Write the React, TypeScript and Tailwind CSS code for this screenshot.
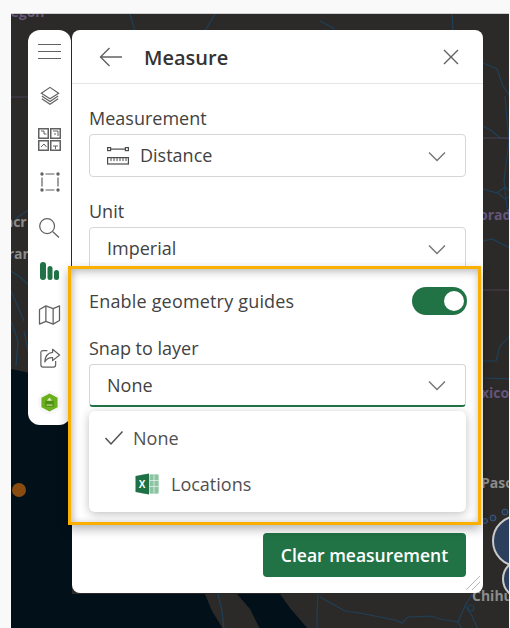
import React from "react";

const font = { fontFamily: '"Open Sans", "Noto Sans", sans-serif' };

const Chevron = () => (
  <svg width="18" height="12" viewBox="0 0 18 12" fill="none" stroke="#757575" strokeWidth="1.4">
    <path d="M1 1.5 L9 9.5 L17 1.5" />
  </svg>
);

const MapBackdrop = () => (
  <svg className="absolute left-0 top-0" width="499" height="615" viewBox="11 13 499 615" fill="none">
    <path d="M11 368 L30 372 L50 385 L72 400 L72 593 L205 593 L212 610 L223 628 L11 628 Z" fill="#02101a" />
    <path d="M237 593 L280 593 L290 607 L308 628 L260 628 L250 608 Z" fill="#02101a" />
    <g stroke="#1f4058" strokeWidth="1.2">
      <path d="M130 13 L135 30 M215 13 L205 30 M320 20 L335 28 M452 13 L453 30" />
      <path d="M483 62 L497 68 L503 85 L510 95" />
      <path d="M483 125 L492 130 L500 137 L510 138 M505 95 L509 140 L504 180 L508 215" />
      <path d="M483 188 L497 192 L505 186 L510 190 M498 192 L505 198 L510 195" />
      <path d="M483 240 L492 238 L510 247" />
      <path d="M483 360 L496 360 L500 345 L510 335 M483 377 L510 378" />
      <path d="M11 225 L18 216 L30 208 M11 270 L20 276 L30 285 M11 290 L24 320 M11 320 L18 340 L16 365 M24 330 L30 360" />
      <path d="M318 593 L317 612 L317 628 M320 596 L345 610 L360 612 L375 615 L395 619 L402 622 L408 616 L432 615 L440 618 L458 621 M458 621 L465 605 L472 593 M465 605 L471 613 L478 628 M458 621 L462 628" />
      <circle cx="471" cy="607" r="3" />
      <path d="M218 593 L222 610 L224 628" />
    </g>
    <path d="M11 96 L30 96 M483 137 L510 137 M483 289 L510 289" stroke="#4a3f55" strokeWidth="1" />
    <circle cx="19" cy="489" r="7" fill="#8a4b10" />
    <g stroke="#3f5878" fill="#26364f" strokeWidth="1">
      <circle cx="485" cy="520" r="2.5" />
      <circle cx="493" cy="517" r="3" />
      <circle cx="505" cy="511" r="3" />
    </g>
    <circle cx="518" cy="540" r="25" fill="#2c3f5c" stroke="#c9c9c9" strokeWidth="2" />
    <circle cx="522" cy="578" r="19" fill="#2c3f5c" stroke="#c9c9c9" strokeWidth="2" />
  </svg>
);

const MapLabel = ({ className, children }: { className: string; children: React.ReactNode }) => (
  <span className={`absolute text-[14px] font-bold leading-none whitespace-nowrap ${className}`}>{children}</span>
);

const Toolbar = () => (
  <div className="relative w-[43px] h-[395px] shrink-0 rounded-[12px] bg-white flex flex-col items-center text-[#616161]">
    <svg className="mt-[13px]" width="23" height="16" viewBox="0 0 23 16" stroke="currentColor" strokeWidth="1">
      <path d="M0 1.5h23M0 8.5h23M0 15.5h23" />
    </svg>
    <svg className="mt-[27px]" width="20" height="20" viewBox="0 0 22 22" fill="none" stroke="currentColor" strokeWidth="1.3">
      <path d="M11 1.5 L20.5 8 L11 14 L1.5 8 Z" />
      <path d="M2 11 L11 17 L20 11 M2 14 L11 20 L20 14" />
    </svg>
    <svg className="mt-[22px]" width="23" height="23" viewBox="0 0 23 23" fill="none" stroke="currentColor" strokeWidth="1.5">
      <rect x="0.75" y="0.75" width="9.5" height="9.5" />
      <rect x="12.75" y="0.75" width="9.5" height="9.5" />
      <rect x="0.75" y="12.75" width="9.5" height="9.5" />
      <rect x="12.75" y="12.75" width="9.5" height="9.5" />
      <path d="M3 3h3v3h2.5M15 3h5v5M16 6h2M3 19l3-3 2.5 3M15 18h5M17.5 18v3" strokeWidth="1" />
    </svg>
    <svg className="mt-[21px]" width="20" height="20" viewBox="0 0 20 20" fill="#616161" stroke="#616161">
      <circle cx="2" cy="2" r="1.7" stroke="none" />
      <circle cx="18" cy="2" r="1.7" stroke="none" />
      <circle cx="2" cy="18" r="1.7" stroke="none" />
      <circle cx="18" cy="18" r="1.7" stroke="none" />
      <path d="M5.5 2h9M5.5 18h9M2 5.5v9M18 5.5v9" strokeWidth="1.2" />
    </svg>
    <svg className="mt-[26px]" width="21" height="20" viewBox="0 0 22 21" fill="none" stroke="currentColor" strokeWidth="1.3">
      <circle cx="8.5" cy="8.5" r="7.8" />
      <path d="M14.5 14.5 L21 20.5" />
    </svg>
    <svg className="mt-[24px]" width="19" height="18" viewBox="0 0 19 18" fill="#217346">
      <rect x="0" y="0" width="6" height="18" rx="3" />
      <rect x="7.5" y="4" width="5" height="14" rx="2.5" />
      <rect x="14" y="8" width="5" height="10" rx="2.5" />
    </svg>
    <svg className="mt-[25px]" width="23" height="20" viewBox="0 0 24 22" fill="none" stroke="currentColor" strokeWidth="1.4" strokeLinejoin="round">
      <path d="M1 5 L8 1 L16 4 L23 1 V17 L16 21 L8 18 L1 21 Z" />
      <path d="M8 1 V18 M16 4 V21" />
    </svg>
    <svg className="mt-[23px]" width="22" height="20" viewBox="0 0 24 23" fill="none" stroke="currentColor" strokeWidth="1.4" strokeLinejoin="round">
      <path d="M9 3 H4 Q1.5 3 1.5 5.5 V19 Q1.5 22 4 22 H16 Q18.5 22 18.5 19 V15" />
      <path d="M15 1.5 L23 8 L15 14.5 V11 Q9 10.5 6 16 Q6.5 6 15 5 Z" />
    </svg>
    <div className="mt-[23px] w-[23px] h-[23px] rounded-full bg-[#f7f7f7] flex items-center justify-center">
      <svg width="17" height="19" viewBox="0 0 20 22">
        <path d="M10 0.5 L19.5 5.5 V16.5 L10 21.5 L0.5 16.5 V5.5 Z" fill="#69b01c" />
        <path d="M5 9h10v7H5z" fill="#4f8f13" />
        <path d="M10 5 L13 9 H7 Z" fill="#d9eeb8" />
        <path d="M6.5 14h7" stroke="#d9eeb8" strokeWidth="1.2" />
      </svg>
    </div>
  </div>
);

const SelectBox = ({ children, className = "" }: { children: React.ReactNode; className?: string }) => (
  <div className={`h-[43px] rounded-[4px] border border-[#d6d6d6] bg-white flex items-center pr-[19px] ${className}`}>
    {children}
    <div className="ml-auto pt-[2px]">
      <Chevron />
    </div>
  </div>
);

const RulerIcon = () => (
  <svg width="22" height="18" viewBox="0 0 22 18" fill="none" stroke="#4a4a4a" strokeWidth="1.2">
    <rect x="0.6" y="0.6" width="3" height="3" />
    <rect x="18.4" y="0.6" width="3" height="3" />
    <path d="M3.6 2.1h14.8" />
    <rect x="0.6" y="10.6" width="20.8" height="6.4" />
    <path d="M4 10.6v3.5M7 10.6v3.5M10 10.6v3.5M13 10.6v3.5M16 10.6v3.5M19 10.6v3.5" strokeWidth="1" />
  </svg>
);

const ExcelIcon = () => (
  <svg width="24" height="22" viewBox="0 0 24 22">
    <rect x="6" y="1.5" width="17.5" height="19" rx="1" fill="#c3e0ce" />
    <path d="M15 1.5h8.5v19H15z" fill="#8cc3a3" />
    <path d="M15 7.5h8.5M15 13.5h8.5M19 1.5v19" stroke="#e2f1e8" strokeWidth="0.8" />
    <path d="M0.5 3 L14 0.5 V21.5 L0.5 19 Z" fill="#1d7145" />
    <text x="7" y="15" textAnchor="middle" fontSize="10" fontWeight="700" fill="#fff" fontFamily="Liberation Sans, sans-serif">
      X
    </text>
  </svg>
);

const ResizeGrip = () => (
  <svg className="absolute right-[2px] bottom-[2px]" width="16" height="16" viewBox="0 0 16 16" stroke="#b5b5b5" strokeWidth="1">
    <path d="M1 15 L15 1 M7 15 L15 7" />
  </svg>
);

export default function App() {
  return (
    <div className="w-[510px] h-[628px] bg-[#f9f9f9] pt-[13px] pl-[11px] overflow-hidden" style={font}>
      <div className="relative w-[498px] h-[615px] bg-[#2b2a29] border-t border-[#cfcfcf] overflow-hidden text-[#424242]">
        <MapBackdrop />
        <MapLabel className="-left-[18px] -top-[9px] text-[#65557a]">Oregon</MapLabel>
        <MapLabel className="-left-[14px] top-[201px] text-[#8c8c8c]">Sacr</MapLabel>
        <MapLabel className="-left-[11px] top-[233px] text-[#8c8c8c]">Fran</MapLabel>
        <MapLabel className="left-[468px] top-[194px] text-[#65557a]">orad</MapLabel>
        <MapLabel className="left-[470px] top-[372px] text-[#65557a]">xico</MapLabel>
        <MapLabel className="left-[470px] top-[462px] text-[#8c8c8c]">Paso</MapLabel>
        <MapLabel className="left-[461px] top-[575px] text-[#8c8c8c]">Chihu</MapLabel>

        <div className="relative flex items-start gap-[1px] pt-[16px] pl-[17px]">
          <Toolbar />

          <div className="relative w-[411px] h-[563px] rounded-[8px] bg-white">
            <div className="h-[54px] border-b border-[#e6e6e6] flex items-center pl-[27px] pr-[24px]">
              <svg width="24" height="20" viewBox="0 0 24 20" fill="none" stroke="#616161" strokeWidth="1.4">
                <path d="M23 10H1.5M10.5 1 L1.5 10 L10.5 19" />
              </svg>
              <span className="ml-[21px] pt-[2px] text-[20px] font-semibold text-[#333]">Measure</span>
              <svg className="ml-auto mt-[1px]" width="16" height="16" viewBox="0 0 16 16" fill="none" stroke="#616161" strokeWidth="1.4">
                <path d="M1 1 L15 15 M15 1 L1 15" />
              </svg>
            </div>

            <div className="px-[17px]">
              <div className="pt-[21px] pb-[3px] text-[18px] leading-[26px]">Measurement</div>
              <SelectBox>
                <div className="ml-[17px] mr-[11px] flex">
                  <RulerIcon />
                </div>
                <span className="text-[18px]">Distance</span>
              </SelectBox>

              <div className="pt-[21px] pb-[3px] text-[18px] leading-[26px]">Unit</div>
              <SelectBox>
                <span className="ml-[17px] text-[18px]">Imperial</span>
              </SelectBox>

              <div className="relative z-10 -mt-[4px] -ml-[21px] w-[413px] h-[259px] border-[3px] border-[#fbb000] bg-white shadow-[0_4px_10px_rgba(0,0,0,0.3),inset_0_3px_8px_rgba(0,0,0,0.22),inset_3px_0_6px_rgba(0,0,0,0.1)] pl-[18px] pr-[11px] pt-[19px]">
                <div className="flex items-center justify-between h-[26px]">
                  <span className="text-[18px] tracking-[0.18px]">Enable geometry guides</span>
                  <div className="w-[55px] h-[28px] rounded-full bg-[#217346] flex items-center justify-end pr-[3px]">
                    <div className="w-[20px] h-[20px] rounded-full bg-white" />
                  </div>
                </div>

                <div className="mt-[21px] pb-[3px] text-[18px] leading-[26px]">Snap to layer</div>
                <SelectBox className="mr-[1px] border-[#bdbdbd] border-b-2 border-b-[#217346]">
                  <span className="ml-[17px] pt-[1px] text-[18px]">None</span>
                </SelectBox>

                <div className="absolute left-[18px] top-[142px] w-[377px] h-[101px] rounded-[6px] bg-white shadow-[0_2px_10px_rgba(0,0,0,0.25)] text-[18px] text-[#505050]">
                  <div className="h-[54px] pl-[15px] flex items-center">
                    <svg width="20" height="16" viewBox="0 0 20 16" fill="none" stroke="#505050" strokeWidth="1.5">
                      <path d="M1.5 8 L7 14 L18.5 1.5" />
                    </svg>
                    <span className="ml-[9px]">None</span>
                  </div>
                  <div className="h-[38px] pl-[46px] flex items-center">
                    <ExcelIcon />
                    <span className="ml-[12px]">Locations</span>
                  </div>
                </div>
              </div>

              <div className="mt-[8px] flex justify-end">
                <div className="w-[203px] h-[44px] rounded-[4px] bg-[#217346] flex items-center justify-center text-[17.5px] font-semibold text-white">
                  Clear measurement
                </div>
              </div>
            </div>
            <ResizeGrip />
          </div>
        </div>
      </div>
    </div>
  );
}
